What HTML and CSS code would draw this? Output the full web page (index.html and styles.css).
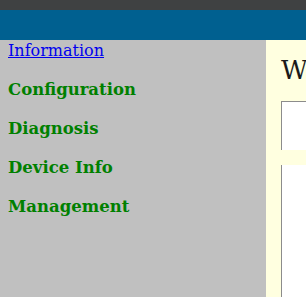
FILE: index.html
```html
<!DOCTYPE html>
<html lang="en">
<head>
    <meta charset="UTF-8">
    <title>Device</title>
    <link rel="stylesheet" href="styles.css">
</head>
<body>
    <div class="topbar"></div>
    <div class="banner"></div>
    <div class="main">
        <div class="sidebar">
            <a href="#" class="menuLink">Information</a>
            <div class="menuItem">Configuration</div>
            <div class="menuItem">Diagnosis</div>
            <div class="menuItem">Device Info</div>
            <div class="menuItem">Management</div>
        </div>
        <div class="content">
            <h2 class="pageTitle">Welcome</h2>
            <div class="panel"></div>
            <div class="panel panelOpen"></div>
        </div>
    </div>
</body>
</html>
```

FILE: styles.css
```css
body {
    margin: 0;
    padding: 0;
    font-family: 'DejaVu Serif', serif;
    font-size: 16px;
    overflow: hidden;
}
.topbar {
    height: 10px;
    background-color: #3f4142;
}
.banner {
    height: 30px;
    background-color: #006090;
}
.main {
    display: flex;
    height: 257px;
}
.sidebar {
    width: 266px;
    flex-shrink: 0;
    background-color: #c0c0c0;
    display: flex;
    flex-direction: column;
    gap: 20px;
    padding: 1px 8px 0;
    box-sizing: border-box;
}
.menuLink {
    color: #0000ee;
    line-height: 19px;
}
.menuItem {
    color: #008000;
    font-weight: bold;
    font-size: 16.5px;
    line-height: 19px;
}
.content {
    flex: 1;
    background-color: #ffffe0;
    padding-left: 15px;
    overflow: hidden;
    white-space: nowrap;
}
.pageTitle {
    margin: 15px 0 0;
    font-size: 26px;
    font-weight: normal;
    line-height: 30px;
    color: #1a1a1a;
}
.panel {
    margin-top: 16px;
    height: 48px;
    width: 300px;
    background-color: #fff;
    border-left: 1px solid #8c8c8c;
    border-top: 1px solid #8c8c8c;
}
.panelOpen {
    margin-top: 15px;
    height: 200px;
    border-top: none;
}
```
